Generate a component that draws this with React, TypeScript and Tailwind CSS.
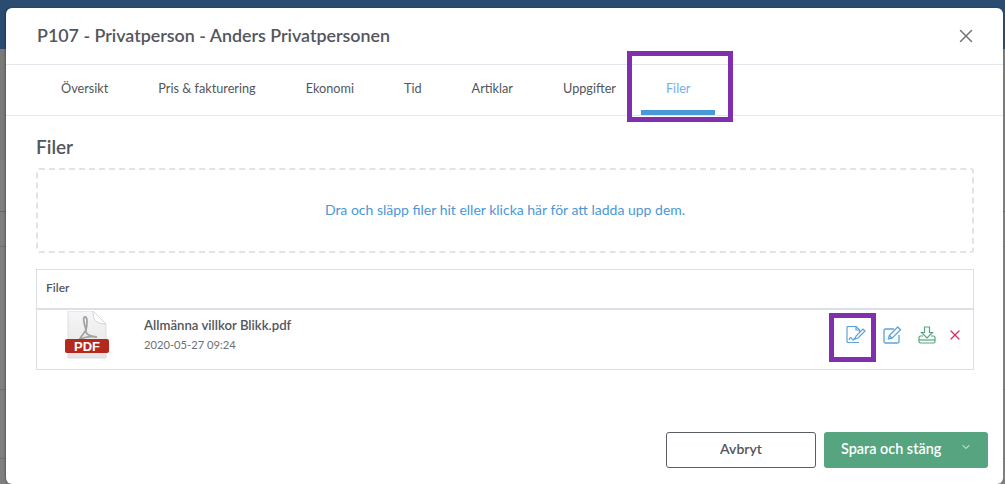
import { X, ChevronDown } from 'lucide-react';

const tabs = ['Översikt', 'Pris & fakturering', 'Ekonomi', 'Tid', 'Artiklar', 'Uppgifter', 'Filer'];

function PdfIcon() {
  return (
    <svg width="44" height="48" viewBox="0 0 44 48">
      <defs>
        <linearGradient id="page" x1="0" y1="0" x2="0" y2="1">
          <stop offset="0" stopColor="#f6f6f6" />
          <stop offset="1" stopColor="#e4e4e4" />
        </linearGradient>
      </defs>
      <path d="M3 0h25l13 13v34H3z" fill="url(#page)" stroke="#dedede" />
      <path d="M28 0c0 8 2 13 13 13z" fill="#fff" stroke="#d4d4d4" />
      <path d="M20 6c-3 0 0 9 1 13l-7 10M20 6c3 0 2 8 1 13s5 6 11 7M14 29c5-3 12-4 18-3" fill="none" stroke="#a3a3a3" strokeWidth="1.8" />
      <rect x="0" y="28" width="44" height="14" rx="2" fill="#b4291c" />
      <text x="22" y="40" textAnchor="middle" fontSize="13" fontWeight="700" fill="#fff" fontFamily="Liberation Sans, sans-serif">PDF</text>
    </svg>
  );
}

function SignIcon() {
  return (
    <svg width="20" height="18" viewBox="0 0 20 18" fill="none" stroke="#5aa2de" strokeWidth="1.2">
      <path d="M13 16.500H2a1 1 0 0 1-1-1v-14a1 1 0 0 1 1-1h8l3.500 3.500V6" />
      <path d="M10 .5V4h3.500" />
      <path d="M9 13l1-3 7-7 2 2-7 7z" />
      <path d="M3 14c1-3 2-3 3-1s1 1 3-1" />
    </svg>
  );
}

function EditIcon() {
  return (
    <svg width="19" height="18" viewBox="0 0 19 18" fill="none" stroke="#5aa2de" strokeWidth="1.3">
      <path d="M16 9v6.500a1.500 1.500 0 0 1-1.500 1.500h-12A1.500 1.500 0 0 1 1 15.500v-11A1.500 1.500 0 0 1 2.500 3H11" />
      <path d="M5.500 13l.8-3.500L14.800 1l2.700 2.700L9 12.200z" />
      <path d="M6.300 9.500L9 12.200" />
    </svg>
  );
}

function DownloadIcon() {
  return (
    <svg width="18" height="18" viewBox="0 0 18 18" fill="none" stroke="#57a580" strokeWidth="1.2">
      <path d="M6.500 1h5v5.500h3L9 12 3.500 6.500h3z" />
      <path d="M5 10H2.500A1.500 1.500 0 0 0 1 11.500v4A1.500 1.500 0 0 0 2.500 17h13a1.500 1.500 0 0 0 1.500-1.500v-4A1.500 1.500 0 0 0 15.500 10H13" />
      <path d="M1 14h16" />
    </svg>
  );
}

export default function App() {
  return (
    <div className="relative h-[484px] w-[1005px] overflow-hidden bg-[#7f7f7f] font-['Lato','Open_Sans',sans-serif]">
      {/* dimmed page behind the modal */}
      <div className="h-[49px] bg-[#294c70]" />
      <div className="h-[111px] bg-[#7a7a7a]" />
      <div className="h-[52px] border-b border-[#666]" />
      <div className="h-[35px] border-b border-[#707070]" />
      <div className="h-[143px] border-b border-[#707070]" />
      <div className="h-[69px] border-b border-[#707070]" />

      <div className="absolute left-[6px] top-[8px] flex h-[476px] w-[997px] flex-col rounded-md bg-white text-[#53565c] shadow-[-1px_0_2px_rgba(0,0,0,0.3)]">
        <div className="flex h-[57px] shrink-0 items-center justify-between border-b border-[#e3e6ec] pl-[31px] pr-[26px]">
          <h1 className="pb-[2px] text-[17.850px] font-semibold">P107 - Privatperson - Anders Privatpersonen</h1>
          <X size={22} strokeWidth={1.7} className="text-[#777]" />
        </div>

        <div className="flex h-[51px] shrink-0 border-b border-[#e3e6ec] pl-[30px]">
          {tabs.map((tab) => (
            <div
              key={tab}
              className={
                tab === 'Filer'
                  ? 'relative flex items-center border-b-[5px] border-[#4a98d8] px-[25px] pt-[3px] text-[12.700px] text-[#73b0e6]'
                  : 'flex items-center px-[25px] pb-[2px] text-[12.700px]'
              }
            >
              {tab}
            </div>
          ))}
        </div>

        <div className="flex flex-1 flex-col pl-[30px] pr-[29px]">
          <h2 className="mt-[19px] text-[19px] font-semibold leading-[24px]">Filer</h2>
          <div className="mt-[9px] flex h-[85px] items-center justify-center rounded-[3px] border-2 border-dashed border-[#e3e3e3] pb-[3px] text-[14px] text-[#4a98d8]">
            Dra och släpp filer hit eller klicka här för att ladda upp dem.
          </div>

          <div className="mt-[16px] h-[101px] border border-[#dcdfe6]">
            <div className="flex h-[40px] items-center border-b-2 border-[#dcdfe6] pb-[3px] pl-[9px] text-[12px] font-semibold">Filer</div>
            <div className="flex h-[59px] items-start">
              <div className="ml-[28px] mt-[1px] w-[79px]">
                <PdfIcon />
              </div>
              <div className="flex-1 pt-[7px]">
                <div className="text-[13.200px] font-semibold leading-[16px]">Allmänna villkor Blikk.pdf</div>
                <div className="mt-[5px] text-[11.200px] leading-[14px] text-[#6d7076]">2020-05-27 09:24</div>
              </div>
              <div className="mr-[10px] mt-[16px] flex items-center">
                <SignIcon />
                <div className="ml-[17px]"><EditIcon /></div>
                <div className="ml-[16px]"><DownloadIcon /></div>
                <X size={16} strokeWidth={1.8} className="ml-[11px] text-[#d0325f]" />
              </div>
            </div>
          </div>

          <div className="mb-[16px] mr-[-14px] mt-auto flex justify-end gap-2">
            <button className="h-[36px] w-[150px] rounded-[3px] border border-[#5a5f66] pb-[3px] text-[14px] font-semibold">Avbryt</button>
            <button className="flex h-[36px] w-[164px] items-center rounded-[3px] bg-[#57a580] pb-[3px] pl-[17px] text-[14.400px] font-semibold text-white">
              Spara och stäng
              <ChevronDown size={12} className="mb-[3px] ml-[19px]" />
            </button>
          </div>
        </div>
      </div>

      {/* purple highlights drawn on the screenshot */}
      <div className="absolute left-[627px] top-[51px] h-[71px] w-[106px] border-[5px] border-[#8030ae]" />
      <div className="absolute left-[829px] top-[313px] h-[49px] w-[47px] border-[5px] border-[#8030ae]" />
    </div>
  );
}
